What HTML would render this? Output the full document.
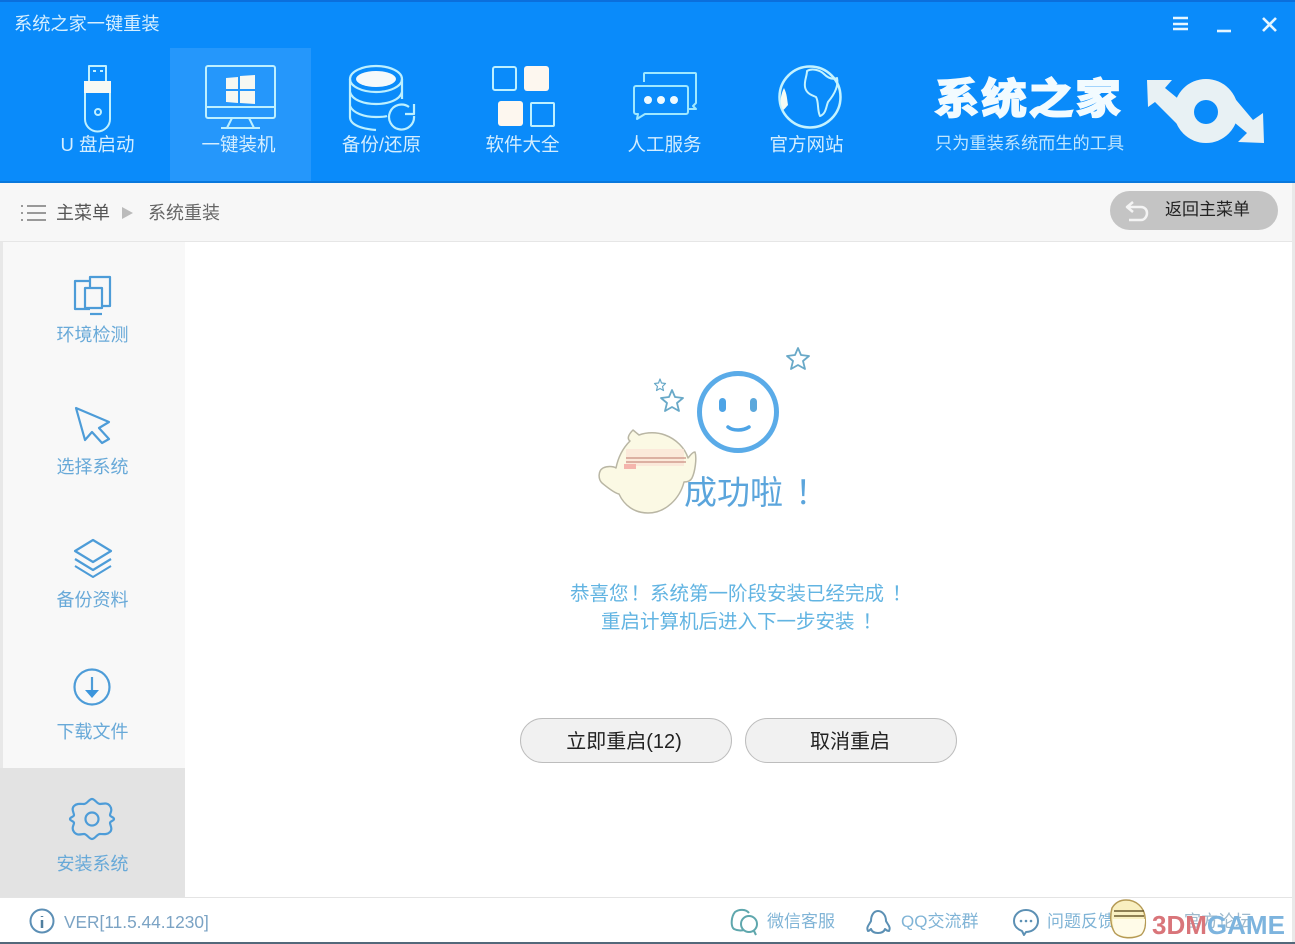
<!DOCTYPE html>
<html lang="zh"><head><meta charset="utf-8"><title>系统之家一键重装</title>
<style>
html,body{margin:0;padding:0;width:1295px;height:944px;overflow:hidden;background:#fff}
body{position:relative;font-family:"Liberation Sans","Noto Sans CJK SC",sans-serif}
div,span{position:absolute;white-space:nowrap}
span.p{position:static;font-family:"Noto Sans CJK TC",sans-serif;padding-left:2px}
.t{text-align:center;line-height:20px;height:20px}
.n{color:#d4eeff;font-size:18.5px;top:135px;width:141px}
.s{color:#68a9d8;font-size:18px;width:185px;left:0}
.b{top:718px;height:43px;border:1px solid #bdbdbd;border-radius:23px;background:#f1f1f1;color:#222;font-size:20px;line-height:46px;text-align:center}
.f{color:#80b4d6;font-size:17px;top:912px;line-height:20px}
svg{position:absolute;left:0;top:0}
</style></head><body>
<div style="left:0;top:0;width:1295px;height:183px;background:#0a8bfa;border-top:2px solid #0b6fdc;box-sizing:border-box;border-bottom:2px solid #0a78dc"></div>
<div style="left:170px;top:48px;width:141px;height:133px;background:#2597fb"></div>
<div style="left:0;top:183px;width:1295px;height:59px;background:#f7f7f7;border-bottom:1px solid #e6e6e6;box-sizing:border-box"></div>
<div style="left:0;top:242px;width:185px;height:656px;background:#f8f8f8"></div>
<div style="left:0;top:242px;width:3px;height:656px;background:#e8e8e8"></div>
<div style="left:0;top:768px;width:185px;height:130px;background:#e3e3e3"></div>
<div style="left:0;top:897px;width:1295px;height:1px;background:#e4e4e4"></div>
<div style="left:0;top:942px;width:1295px;height:2px;background:#53687a"></div>
<div style="left:1292px;top:183px;width:3px;height:759px;background:#e9e9e9"></div>

<div style="left:14px;top:13px;font-size:18.2px;line-height:22px;color:#d6efff">系统之家一键重装</div>
<div class="t n" style="left:27px">U 盘启动</div>
<div class="t n" style="left:168px">一键装机</div>
<div class="t n" style="left:311px">备份/还原</div>
<div class="t n" style="left:452px">软件大全</div>
<div class="t n" style="left:594px">人工服务</div>
<div class="t n" style="left:736px">官方网站</div>
<div style="left:934px;top:69px;font-size:46px;line-height:60px;font-weight:900;color:#f2fbff;letter-spacing:1px;-webkit-text-stroke:1px #f2fbff;transform:scaleY(.92)">系统之家</div>
<div style="left:935px;top:131px;font-size:17.2px;line-height:24px;color:#bfe6ff">只为重装系统而生的工具</div>

<div style="left:56px;top:202px;font-size:18px;line-height:22px;color:#555">主菜单</div>
<div style="left:148px;top:202px;font-size:18px;line-height:22px;color:#666">系统重装</div>
<div style="left:1110px;top:191px;width:168px;height:39px;border-radius:20px;background:#c4c4c4"></div>
<div style="left:1165px;top:199px;font-size:17px;line-height:22px;color:#222">返回主菜单</div>

<div class="t s" style="top:325px">环境检测</div>
<div class="t s" style="top:457px">选择系统</div>
<div class="t s" style="top:590px">备份资料</div>
<div class="t s" style="top:722px">下载文件</div>
<div class="t s" style="top:854px">安装系统</div>

<div style="left:684px;top:467px;font-size:33px;line-height:46px;color:#5ba5dc">成功啦<span class="p" style="padding-left:12px">！</span></div>
<div style="left:570px;top:580px;font-size:19.5px;line-height:24px;color:#62b4e2">恭喜您<span class="p">！</span>系统第一阶段安装已经完成<span class="p" style="padding-left:8px">！</span></div>
<div style="left:601px;top:608px;font-size:19.5px;line-height:24px;color:#62b4e2">重启计算机后进入下一步安装<span class="p" style="padding-left:8px">！</span></div>
<div class="b" style="left:520px;width:206px;padding-right:4px">立即重启(12)</div>
<div class="b" style="left:745px;width:208px;padding-right:2px">取消重启</div>

<div class="f" style="left:64px;font-size:17.3px;color:#7ba3c4">VER[11.5.44.1230]</div>
<div class="f" style="left:767px">微信客服</div>
<div class="f" style="left:901px">QQ交流群</div>
<div class="f" style="left:1047px">问题反馈</div>
<div class="f" style="left:1184px;color:#9db9cc">官方论坛</div>
<div style="left:1152px;top:908px;font-size:26px;line-height:34px;font-weight:700;color:#d9757a">3DM<span style="position:static;color:#7db4de">GAME</span></div>

<svg width="1295" height="944" viewBox="0 0 1295 944" fill="none" stroke-linejoin="round">
<!-- window controls -->
<g stroke="#e6f6ff" stroke-width="2.6">
<path d="M1173 18h15M1173 24h15M1173 29h15"/><path d="M1217 31h14"/><path d="M1263 18l13 13M1276 18l-13 13"/>
</g>
<!-- usb -->
<g stroke="#bff0ff" stroke-width="2">
<path d="M89 81V66h17v15"/><path d="M93 71h3M100 71h3"/>
<path d="M85 93v26a12.500 12.500 0 0 0 25 0V93"/>
<circle cx="98" cy="112" r="3"/>
</g>
<path d="M84 81h27v12H84z" fill="#f6f9f4"/>
<!-- monitor -->
<g stroke="#bdf0ff" stroke-width="2">
<rect x="206" y="66" width="69" height="52" rx="2"/><path d="M207 107h67"/><path d="M232 118l-5 10M249 118l5 10M221 128h39"/>
</g>
<path d="M226 78l12-1v12h-12zM240 76l15-1v14h-15zM226 91h12v12l-12-1zM240 91h15v13l-15-1z" fill="#f6f8f2"/>
<!-- database -->
<g stroke="#bdf0ff" stroke-width="2.200">
<ellipse cx="376" cy="79" rx="26" ry="13"/>
<path d="M350 79v38c0 8 12 12 26 13"/><path d="M402 79v20"/>
<path d="M350 92c2 8 14 12 26 12s24-4 26-12"/><path d="M350 106c3 7 14 11 26 11 4 0 8 0 11-1"/>
<path d="M414 116a12.500 12.500 0 1 1-5-9"/><path d="M414 104v10h-9"/>
</g>
<ellipse cx="376" cy="79" rx="20" ry="8" fill="#f4f9fb"/>
<!-- software -->
<g stroke="#bdf0ff" stroke-width="2"><rect x="493" y="67" width="23" height="23" rx="2"/><rect x="531" y="103" width="23" height="23" rx="1"/></g>
<rect x="524" y="66" width="25" height="25" rx="3" fill="#fdf7ef"/><rect x="498" y="101" width="25" height="25" rx="3" fill="#fdf7ef"/>
<!-- chat -->
<g stroke="#9fe8ff" stroke-width="2">
<path d="M644 82v-8a1 1 0 0 1 1-1h50a1 1 0 0 1 1 1v29l-3 3 3 3h-9"/>
<path d="M634 88a2 2 0 0 1 2-2h50a2 2 0 0 1 2 2v24a2 2 0 0 1-2 2h-41l-8 5 1-5h-2a2 2 0 0 1-2-2z"/>
</g>
<g fill="#eefaff"><circle cx="648" cy="100" r="4"/><circle cx="661" cy="100" r="4"/><circle cx="674" cy="100" r="4"/></g>
<!-- globe -->
<circle cx="810" cy="97" r="30.500" stroke="#c4f3ff" stroke-width="2.500"/>
<path d="M807 71c5-3 13-1 17 3 4 4 8 6 13 4 2 9-4 18-9 24-2 5-2 12-8 14-3-6-1-14-4-19-5-2-10-4-11-10s2-11 2-16z" stroke="#c4f3ff" stroke-width="2"/>
<path d="M784 88c-3 6-5 14-1 22 2-1 3-3 5-5-1-6-1-11-4-17z" fill="#f4fbf4"/>
<!-- logo arrows -->
<circle cx="1206" cy="111" r="32" fill="#e8f1f4"/>
<path d="M1147 80h25l-7 8 22 18-8 20-24-24-7 5z" fill="#e8f1f4"/>
<path d="M1226 88l27 32 10-7 1 30-26-1 9-9-24-20z" fill="#e8f1f4"/>
<circle cx="1206" cy="112" r="12" fill="#0a8bfa"/>
<!-- breadcrumb -->
<g stroke="#999" stroke-width="2"><path d="M27 206h19M27 213h19M27 220h19"/><path d="M21 206h2M21 213h2M21 220h2"/></g>
<path d="M122 207l11 6-11 6z" fill="#bbb"/>
<path d="M1133 202l-6 5 6 5M1128 207h13c4 0 6 3 6 6s-2 7-6 7h-12" stroke="#f4f4f4" stroke-width="2.500"/>
<!-- sidebar icons -->
<g stroke="#4d9cd8" stroke-width="2.200">
<path d="M90 287v-10h20v29h-8"/><path d="M90 309H75v-28h15"/><rect x="85" y="288" width="17" height="20"/><path d="M90 314h12"/>
<path d="M76 408l33 14-10 6 10 11-7 4-10-11-7 8z"/>
<path d="M93 540l18 11-18 11-18-11z"/><path d="M75 559l18 11 18-11"/><path d="M75 566l18 11 18-11" stroke-width="2"/>
<circle cx="92" cy="687" r="17.500"/><path d="M92 677v15"/>
<path d="M84 804c3 0 5-5 8-5s5 5 8 5 7-2 10 2 0 7 0 9 4 2 4 4-4 2-4 4 3 6 0 9-7 2-10 2-5 5-8 5-5-5-8-5-7 2-10-2 0-7 0-9-4-2-4-4 4-2 4-4-3-6 0-9 7-2 10-2z"/>
<circle cx="92" cy="819" r="6.500"/>
</g>
<path d="M85 690h14l-7 8z" fill="#3b95dc"/>
<!-- smiley -->
<circle cx="738" cy="412" r="38.500" stroke="#5aabe8" stroke-width="5"/>
<rect x="719" y="398" width="7" height="14" rx="3.500" fill="#4ea4e6"/><rect x="750" y="398" width="7" height="14" rx="3.500" fill="#5ca8dc"/>
<path d="M728 427c5 4 15 4 21 0" stroke="#4ea4e6" stroke-width="3.500" stroke-linecap="round"/>
<g stroke="#69a9c8" stroke-width="1.800">
<path d="M798 348l3 7 8 1-6 5 2 8-7-4-7 4 2-8-6-5 8-1z"/>
<path d="M672 390l3 7 8 1-6 5 2 8-7-4-7 4 2-8-6-5 8-1z"/>
<path d="M660 379l1.500 4 4 .5-3 3 1 4-3.500-2-3.500 2 1-4-3-3 4-.5z" stroke-width="1.200"/>
</g>
<!-- mascot -->
<path d="M633 430l6 5c8-3 18-3 26 0 11 4 20 13 23 23 2-2 4-6 7-6 2 6 0 20-3 26-2 4-6 4-8 4-4 16-18 31-36 31-14 0-24-8-29-19-5-1-12-7-17-11-4-4-4-12 1-15 4-2 10-2 13 0 2-10 7-20 14-27-3-2-2-6 3-11z" fill="#fbf9e4" stroke="#b9b6a4" stroke-width="1.500"/>
<path d="M626 449h58v17h-58z" fill="#fbe3d6" opacity=".7"/>
<path d="M626 458h60M626 462h60" stroke="#c98f80" stroke-width="1.300"/>
<path d="M624 464h12v5h-12z" fill="#f4b5ac"/>
<!-- footer icons -->
<circle cx="42" cy="921" r="11.500" stroke="#5c8fb5" stroke-width="2"/><path d="M42 916v1M42 920v8" stroke="#4f7f9f" stroke-width="2.500"/>
<g stroke="#5fa7ad" stroke-width="2">
<path d="M744 930c-4 1-8 0-10-1l-1-1c-2-3-2-11 2-16 4-3 11-3 14 1"/><circle cx="749" cy="924" r="8"/><path d="M754 931l2 4"/>
<path d="M868 931c-2-4 1-6 3-10 0-6 3-10 7-10s8 4 8 10c2 4 5 6 3 10-2 0-3-1-4-2-1 3-4 4-7 4s-6-1-7-4c-1 1-2 2-3 2z" stroke="#5c90b4"/>
<path d="M1026 910c7 0 12 5 12 11s-5 11-12 11l-2 3-2-4c-5-2-8-5-8-10 0-6 5-11 12-11z" stroke="#5c90b4"/>
</g>
<g fill="#5c90b4"><circle cx="1021" cy="921" r="1.300"/><circle cx="1026" cy="921" r="1.300"/><circle cx="1031" cy="921" r="1.300"/></g>
<!-- corner mascot -->
<path d="M1112 908c3-5 8-8 14-8 10 0 18 7 19 17 1 9 0 14-4 18-8 4-20 4-26-2-5-7-5-18-3-25z" fill="#f9efc0" stroke="#b59a55" stroke-width="1.500"/>
<path d="M1114 911h30M1114 916h30" stroke="#6b5a2e" stroke-width="1.500"/>
<path d="M1113 919h32c0 6-1 12-4 15-8 4-20 3-25-1-3-4-3-9-3-14z" fill="#fffbe8"/>
</svg>
</body></html>
